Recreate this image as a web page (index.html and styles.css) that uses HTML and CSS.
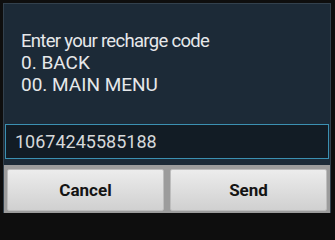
FILE: index.html
```html
<!DOCTYPE html>
<html>
<head>
<meta charset="utf-8">
<link rel="stylesheet" href="styles.css">
</head>
<body>
<div class="dialog">
  <div class="message">
    <div class="prompt">Enter your recharge code</div>
    <div>0. BACK</div>
    <div>00. MAIN MENU</div>
  </div>
  <div class="field">
    <div class="input">10674245585188</div>
  </div>
  <div class="buttons">
    <div class="btn">Cancel</div>
    <div class="btn">Send</div>
  </div>
</div>
</body>
</html>
```
FILE: styles.css
```css
html, body {
  margin: 0;
  padding: 0;
  background: #0e0e0e;
  width: 335px;
  height: 216px;
  overflow: hidden;
}
.dialog {
  margin: 3px 4px 0 3px;
  height: 210px;
  background: #1c2a37;
  border: 1px solid #33414d;
  border-bottom: none;
  box-sizing: border-box;
  display: flex;
  flex-direction: column;
  font-family: Roboto, "Liberation Sans", sans-serif;
}
.message {
  padding: 26px 0 0 17px;
  height: 92px;
  color: #e6e8ea;
  font-size: 19px;
  line-height: 22px;
  box-sizing: border-box;
}
.prompt {
  font-size: 18.5px;
  letter-spacing: -0.7px;
}
.field {
  padding: 28px 1px 0 1px;
}
.input {
  height: 35px;
  box-sizing: border-box;
  background: #121c25;
  border: 1px solid #3b90b2;
  color: #d6d8da;
  font-size: 18px;
  padding-left: 9px;
  line-height: 33px;
}
.buttons {
  margin-top: 6px;
  flex: 1;
  background: #9c9c9c;
  display: flex;
  gap: 6px;
  padding: 4px 3px 2px 3px;
}
.btn {
  flex: 1;
  background: linear-gradient(#ececec, #d0d0d0);
  border: 1px solid #bdbdbd;
  border-radius: 2px;
  display: flex;
  align-items: center;
  justify-content: center;
  font-weight: bold;
  font-size: 17px;
  color: #141414;
}
```
